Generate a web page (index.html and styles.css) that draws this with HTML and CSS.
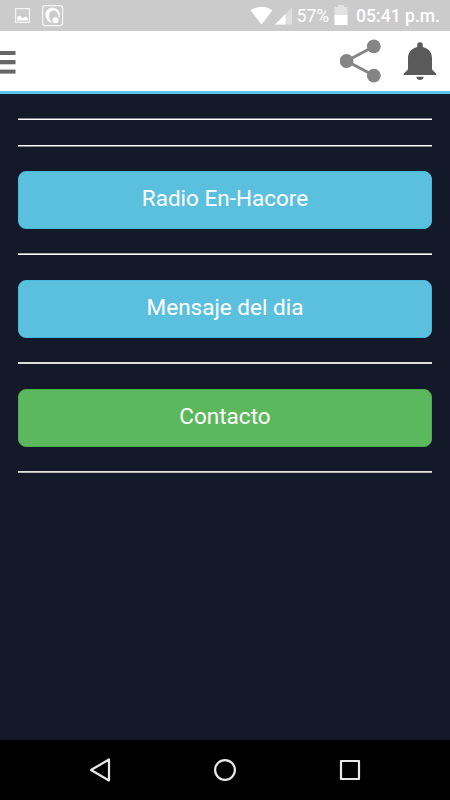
FILE: index.html
```
<!DOCTYPE html>
<html lang="es">
<head>
<meta charset="utf-8">
<title>Radio En-Hacore</title>
<link rel="stylesheet" href="styles.css">
</head>
<body>
<div class="status">
  <svg class="status-left" width="70" height="31" viewBox="0 0 70 31">
    <path d="M15.6 8.6H29.4V22.4H15.6Z" fill="none" stroke="#f5f5f5" stroke-width="1.2"/>
    <path d="M17 20.5V17L20 15.6L22.5 18L26 16.8L28 18.5V20.5Z" fill="#fff"/>
    <rect x="42.6" y="5.6" width="20" height="20" rx="2.5" fill="none" stroke="#f5f5f5" stroke-width="1.2"/>
    <path d="M51.5 22.5C43.5 20 44 8 52.500 8C58 8 60.500 13 59.200 17.500C58.500 13 57 10.200 53.500 10.200C47.500 10.200 47.500 19 51.500 22.500Z" fill="#fff" stroke="#fff" stroke-width=".7"/>
    <circle cx="55.500" cy="20.300" r="3" fill="#fff"/>
  </svg>
  <svg class="signals" width="46" height="31" viewBox="0 0 46 31">
    <path d="M.5 10.200Q11.500 3.500 22.500 10.200L11.500 24.500Z" fill="#fff"/>
    <path d="M42 7.500V24.500H25Z" fill="#dedede"/>
    <path d="M35.500 14V24.500H25Z" fill="#fff"/>
  </svg>
  <span class="percent">57%</span>
  <svg class="battery" width="15" height="31" viewBox="0 0 15 31">
    <path d="M.5 7H4V5H10V7H13.500V15H.5Z" fill="#e2e2e2"/>
    <path d="M.5 15H13.500V25H.5Z" fill="#fff"/>
  </svg>
  <span class="clock">05:41 p.m.</span>
</div>
<header class="bar">
  <svg width="16" height="60" viewBox="0 31 16 60" fill="#666">
    <rect y="51" width="15.500" height="4"/>
    <rect y="60" width="15.500" height="4.300"/>
    <rect y="69.600" width="15.500" height="4"/>
  </svg>
  <svg width="110" height="60" viewBox="340 31 110 60">
    <path d="M374 46.500L346.500 61L374 75.500" fill="none" stroke="#858585" stroke-width="3"/>
    <g fill="#858585"><circle cx="373.800" cy="46.300" r="6.900"/><circle cx="346.600" cy="61" r="6.900"/><circle cx="373.800" cy="75.600" r="6.900"/></g>
    <path d="M417.200 47V45A2.800 2.800 0 0 1 422.800 45V47C429 48.500 432 53 432 58V68.500C432 71 436.500 72.500 436.500 75H403.500C403.500 72.500 408 71 408 68.500V58C408 53 411 48.500 417.200 47Z" fill="#5a5a5a"/>
    <path d="M416.300 76.700H423.700Q423 80 420 80Q417 80 416.300 76.700Z" fill="#5a5a5a"/>
  </svg>
</header>
<main class="content">
  <hr class="rule low">
  <hr class="rule high">
  <a class="btn info">Radio En-Hacore</a>
  <hr class="rule mid">
  <a class="btn info">Mensaje del dia</a>
  <hr class="rule">
  <a class="btn success">Contacto</a>
  <hr class="rule last">
</main>
<nav class="nav">
  <svg width="450" height="60" viewBox="0 740 450 60" fill="none" stroke="#e8e8e8" stroke-width="2.200" stroke-linejoin="round">
    <path d="M109 759.500V780.500L91 770Z"/>
    <circle cx="225" cy="770" r="9.900"/>
    <rect x="341" y="761" width="18" height="18"/>
  </svg>
</nav>
</body>
</html>
```
FILE: styles.css
```
* { box-sizing: border-box; }
body {
  margin: 0;
  height: 800px;
  display: flex;
  flex-direction: column;
  overflow: hidden;
  background: #131928;
  color: #fff;
  font-family: Roboto, sans-serif;
}
svg { display: block; flex: none; }
.status {
  flex: none;
  height: 31px;
  display: flex;
  align-items: center;
  background: #cbcbcb;
  font-size: 17.6px;
  line-height: 31px;
  white-space: nowrap;
}
.signals { margin-left: 180px; }
.percent { width: 38px; padding: 2px 0 0 .5px; color: #fff; }
.clock { margin-left: 7px; padding-top: 2px; font-weight: 500; }
.bar {
  flex: none;
  height: 63px;
  display: flex;
  justify-content: space-between;
  background: #fff;
  border-bottom: 3px solid #5bc4f5;
}
.content {
  flex: 1;
  padding: 24px 18px 0;
}
.rule {
  height: 2px;
  margin: 24px 0 25px;
  border: 0;
  background: #dcdcd8;
}
.rule.low { margin: 0 0 25px; background: linear-gradient(#85878e 50%, #fff 50%); }
.rule.high { margin: 0 0 24px; background: linear-gradient(#fff 50%, #85878e 50%); }
.rule.mid { background: linear-gradient(#a5a6ab 50%, #fff 50%); }
.rule.last { background: linear-gradient(#e4e4e0 50%, #b8b8b8 50%); }
.btn {
  display: block;
  height: 58px;
  border: 1px solid;
  border-radius: 8px;
  font-size: 22.5px;
  line-height: 53px;
  text-align: center;
}
.info { background: #5bc0de; border-color: #46b8da; }
.success { background: #5cb85c; border-color: #4cae4c; }
.nav { flex: none; height: 60px; background: #000; }
```
